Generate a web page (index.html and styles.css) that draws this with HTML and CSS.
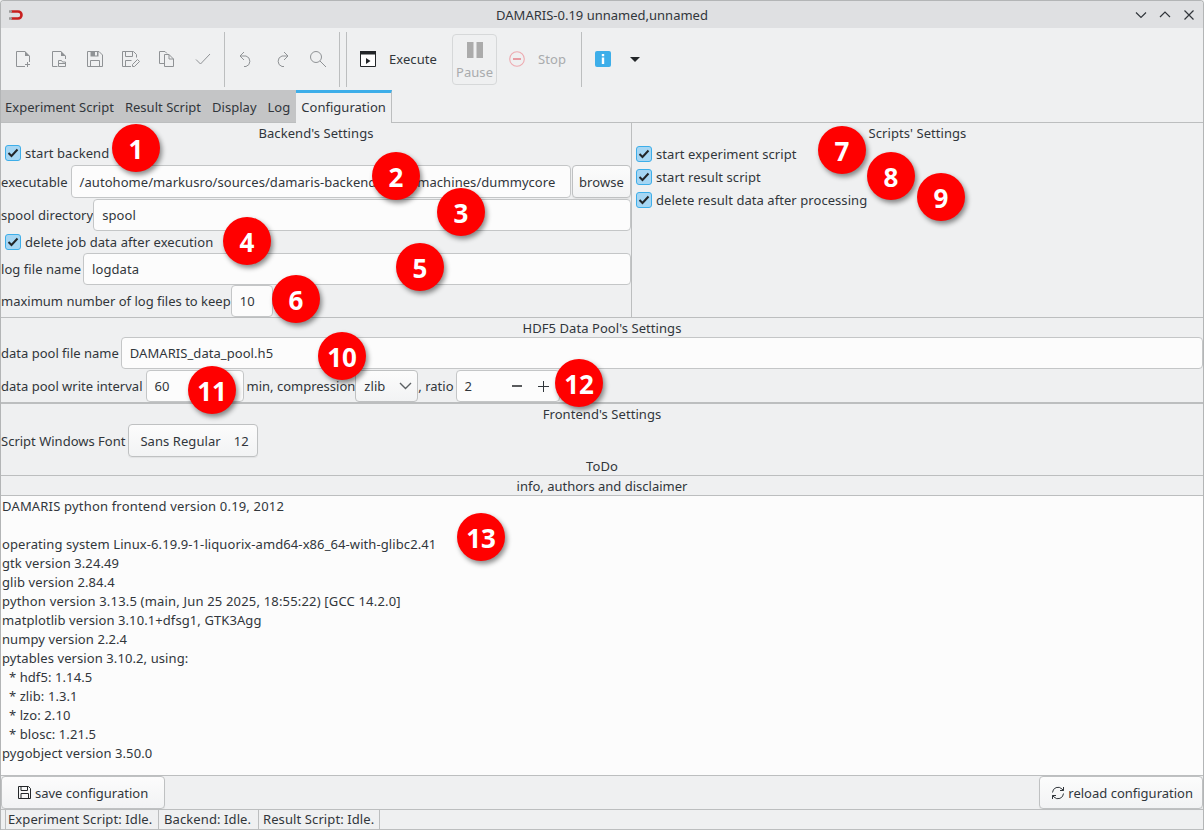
FILE: index.html
```html
<!DOCTYPE html>
<html lang="en">
<head>
    <meta charset="UTF-8">
    <title>DAMARIS-0.19 unnamed,unnamed</title>
    <link rel="stylesheet" href="styles.css">
</head>
<body>
<div class="window">
    <!-- title bar -->
    <div class="titlebar">
        <svg class="logo" width="16" height="12" viewBox="0 0 16 12"><path d="M3 2.500h7a3.500 3.500 0 0 1 0 7H3" fill="none" stroke="#c8201f" stroke-width="2.600"/><path d="M1 2.500h3M1 9.500h3" stroke="#9a9a9a" stroke-width="2.600"/></svg>
        <div class="title">DAMARIS-0.19 unnamed,unnamed</div>
        <div class="winbtns">
            <svg width="12" height="12" viewBox="0 0 12 12"><path d="M1 3.500l5 5 5-5" fill="none" stroke="#31363b" stroke-width="1.200"/></svg>
            <svg width="12" height="12" viewBox="0 0 12 12"><path d="M1 8l5-5 5 5" fill="none" stroke="#31363b" stroke-width="1.200"/></svg>
            <svg width="12" height="12" viewBox="0 0 12 12"><path d="M1.500 1.500l9 9M10.500 1.500l-9 9" fill="none" stroke="#31363b" stroke-width="1.200"/></svg>
        </div>
    </div>

    <!-- toolbar -->
    <div class="toolbar">
        <div class="tool"><svg class="ico" width="14" height="16" viewBox="0 0 14 16"><path d="M9 15.500H.500V.500h8.500M13.500 5v6"/><path class="solid" d="M9 0l5 5H9z"/><path d="M11.500 11v5M9 13.500h5"/></svg></div>
        <div class="tool"><svg class="ico" width="14" height="16" viewBox="0 0 14 16"><path d="M5.500 15.500H.500V.500h8.500M13.500 5v3"/><path class="solid" d="M9 0l5 5H9z"/><path d="M6.500 15.500v-6h3l1 1.500h3v4.500zM6.500 12.500h7"/></svg></div>
        <div class="tool"><svg class="ico" width="16" height="16" viewBox="0 0 16 16"><path d="M.500.500h11.500l3.500 3.500v11.500H.500zM3.500 15.500v-6h9v6"/><path class="solid" d="M3.500 0h8v5.500h-8z"/><path class="cut" d="M8 1h2v3.500H8z"/></svg></div>
        <div class="tool"><svg class="ico" width="18" height="16" viewBox="0 0 18 16"><path d="M9 15.500H.500V.500h11l3 3v3M3.500 15.500v-6h6M3.500.500v5h7v-5"/><path d="M10.500 15.500v-2l5-5 2 2-5 5z"/></svg></div>
        <div class="tool"><svg class="ico" width="16" height="16" viewBox="0 0 16 16"><path d="M5 12.500H.500V.500h5.500l2 2M5.500 15.500v-12H10l4.500 4.500v7.500zM10 3.500V8h4.500"/></svg></div>
        <div class="tool"><svg class="ico" width="16" height="12" viewBox="0 0 16 12"><path d="M1 6.500l4.500 4.500L15 1"/></svg></div>
        <div class="vsep sep-a"></div>
        <div class="tool"><svg class="ico" width="14" height="16" viewBox="0 0 14 16"><path d="M5 1L1 5l4 4M1 5h6a5.500 5.500 0 0 1 0 10.500H5"/></svg></div>
        <div class="tool"><svg class="ico" width="14" height="16" viewBox="0 0 14 16"><path d="M9 1l4 4-4 4M13 5H7a5.500 5.500 0 0 0 0 10.500h2"/></svg></div>
        <div class="tool"><svg class="ico" width="16" height="16" viewBox="0 0 16 16"><circle cx="6" cy="6" r="5.500"/><path d="M10 10l6 6"/></svg></div>
        <div class="vsep sep-b"></div>
        <div class="vsep sep-c"></div>
        <div class="tool-text run">
            <svg width="16" height="16" viewBox="0 0 16 16"><path d="M.500.500h15v15H.500z" fill="#fff" stroke="#232629"/><path d="M0 0h16v3.500H0z" fill="#232629"/><path d="M6 7l4.500 3L6 13z" fill="#232629"/></svg>
            <span>Execute</span>
        </div>
        <div class="pause">
            <svg width="16" height="16" viewBox="0 0 16 16"><path d="M0 0h6.500v16H0zM9.500 0H16v16H9.500z" fill="#ababab"/></svg>
            <span>Pause</span>
        </div>
        <div class="tool-text stop">
            <svg width="16" height="16" viewBox="0 0 16 16"><circle cx="8" cy="8" r="7.300" fill="none" stroke="#eeaab0" stroke-width="1.100"/><path d="M4 8h8" stroke="#e58088" stroke-width="1.400"/></svg>
            <span>Stop</span>
        </div>
        <div class="vsep sep-d"></div>
        <div class="tool"><svg width="16" height="16" viewBox="0 0 16 16"><rect width="16" height="16" rx="2" fill="#3daee9"/><path d="M6.800 3h2.400v2.200H6.800zM6.800 6.500h2.400V13H6.800z" fill="#fff"/></svg></div>
        <div class="caret"></div>
    </div>

    <!-- tabs -->
    <div class="tabs">
        <div class="tab">Experiment Script</div>
        <div class="tab">Result Script</div>
        <div class="tab">Display</div>
        <div class="tab">Log</div>
        <div class="tab active">Configuration</div>
    </div>

    <div class="content">
        <div class="settings-top">
            <div class="col-backend">
                <div class="heading">Backend's Settings</div>
                <div class="check-row start-backend"><span class="check"><svg width="12" height="10" viewBox="0 0 12 10"><path d="M1.500 5l3 3 6-6.500" fill="none" stroke="#232629" stroke-width="2"/></svg></span>start backend</div>
                <div class="row row-exec">
                    <label class="lbl">executable</label>
                    <div class="entry grow">/autohome/markusro/sources/damaris-backend/build/machines/dummycore</div>
                    <div class="btn browse">browse</div>
                </div>
                <div class="row row-spool">
                    <label class="lbl">spool directory</label>
                    <div class="entry grow">spool</div>
                </div>
                <div class="check-row delete-job"><span class="check"><svg width="12" height="10" viewBox="0 0 12 10"><path d="M1.500 5l3 3 6-6.500" fill="none" stroke="#232629" stroke-width="2"/></svg></span>delete job data after execution</div>
                <div class="row row-log">
                    <label class="lbl">log file name</label>
                    <div class="entry grow">logdata</div>
                </div>
                <div class="row row-keep">
                    <label class="lbl">maximum number of log files to keep</label>
                    <div class="entry keep">10</div>
                </div>
            </div>
            <div class="col-scripts">
                <div class="heading">Scripts' Settings</div>
                <div class="check-row"><span class="check"><svg width="12" height="10" viewBox="0 0 12 10"><path d="M1.500 5l3 3 6-6.500" fill="none" stroke="#232629" stroke-width="2"/></svg></span>start experiment script</div>
                <div class="check-row"><span class="check"><svg width="12" height="10" viewBox="0 0 12 10"><path d="M1.500 5l3 3 6-6.500" fill="none" stroke="#232629" stroke-width="2"/></svg></span>start result script</div>
                <div class="check-row"><span class="check"><svg width="12" height="10" viewBox="0 0 12 10"><path d="M1.500 5l3 3 6-6.500" fill="none" stroke="#232629" stroke-width="2"/></svg></span>delete result data after processing</div>
            </div>
        </div>

        <div class="section hdf">
            <div class="heading">HDF5 Data Pool's Settings</div>
            <div class="row row-pool">
                <label class="lbl">data pool file name</label>
                <div class="entry grow">DAMARIS_data_pool.h5</div>
            </div>
            <div class="row row-interval">
                <label class="lbl">data pool write interval</label>
                <div class="entry interval">60</div>
                <label class="lbl min">min, compression</label>
                <div class="combo">zlib<svg width="13" height="8" viewBox="0 0 13 8"><path d="M1 1l5.500 5.500L12 1" fill="none" stroke="#5c6164" stroke-width="1.400"/></svg></div>
                <label class="lbl ratio">, ratio</label>
                <div class="entry spin">
                    <span>2</span>
                    <svg class="minus" width="10" height="10" viewBox="0 0 10 10"><path d="M0 5h10" stroke="#232629" stroke-width="1.600"/></svg>
                    <svg class="plus" width="11" height="11" viewBox="0 0 11 11"><path d="M0 5.500h11M5.500 0v11" stroke="#31363b"/></svg>
                </div>
            </div>
        </div>

        <div class="section frontend">
            <div class="heading">Frontend's Settings</div>
            <div class="row row-font">
                <label class="lbl">Script Windows Font</label>
                <div class="btn font"><span>Sans Regular</span><span>12</span></div>
            </div>
            <div class="todo">ToDo</div>
        </div>

        <div class="info-head">info, authors and disclaimer</div>
        <pre class="info"><span class="wide">DAMARIS python frontend version 0.19, 2012</span>

operating system Linux-6.19.9-1-liquorix-amd64-x86_64-with-glibc2.41
gtk version 3.24.49
glib version 2.84.4
<span class="wide">python version 3.13.5 (main, Jun 25 2025, 18:55:22) [GCC 14.2.0]</span>
matplotlib version 3.10.1+dfsg1, GTK3Agg
numpy version 2.2.4
pytables version 3.10.2, using:
  * hdf5: 1.14.5
  * zlib: 1.3.1
  * lzo: 2.10
  * blosc: 1.21.5
pygobject version 3.50.0</pre>

        <div class="actions">
            <div class="btn action save">
                <svg width="13" height="13" viewBox="0 0 13 13"><path d="M.500.500h10l2 2v10H.500z M3 .500v4h6.500v-4M3 12.500V7.500h7.500v5" fill="none" stroke="#232629"/></svg>
                save configuration
            </div>
            <div class="btn action reload">
                <svg width="14" height="14" viewBox="0 0 14 14"><path d="M1.500 6.500A5.500 5.500 0 0 1 11 3l1.500 1.500M12.500 1v3.500H9M12.500 7.500A5.500 5.500 0 0 1 3 11L1.500 9.500M1.500 13V9.500H5" fill="none" stroke="#31363b"/></svg>
                reload configuration
            </div>
        </div>
    </div>

    <!-- status bar -->
    <div class="statusbar">
        <div class="cell cell-exp">Experiment Script: Idle.</div>
        <div class="cell cell-back">Backend: Idle.</div>
        <div class="cell cell-res">Result Script: Idle.</div>
    </div>

    <!-- numbered callouts laid over the screenshot -->
    <div class="badge b1">1</div>
    <div class="badge b2">2</div>
    <div class="badge b3">3</div>
    <div class="badge b4">4</div>
    <div class="badge b5">5</div>
    <div class="badge b6">6</div>
    <div class="badge b7">7</div>
    <div class="badge b8">8</div>
    <div class="badge b9">9</div>
    <div class="badge b10">10</div>
    <div class="badge b11">11</div>
    <div class="badge b12">12</div>
    <div class="badge b13">13</div>
</div>
</body>
</html>
```

FILE: styles.css
```css
* {
    box-sizing: border-box;
    margin: 0;
    padding: 0;
}

html, body {
    height: 100%;
    overflow: hidden;
}

body {
    font-family: "Noto Sans", sans-serif;
    font-size: 13px;
    letter-spacing: 0.06px;
    color: #31363b;
    background-color: #eff0f1;
}

.window {
    position: relative;
    height: 830px;
    display: flex;
    flex-direction: column;
    border: 1px solid #b3b5b6;
    border-bottom: 0;
    border-top-left-radius: 4px;
    border-top-right-radius: 4px;
    overflow: hidden;
}

.titlebar {
    height: 27px;
    flex: none;
    background-color: #dfe0e2;
    display: flex;
    align-items: center;
    position: relative;
    padding-left: 7px;
}

.title {
    position: absolute;
    left: 0;
    right: 0;
    text-align: center;
    letter-spacing: 0;
}

.winbtns {
    margin-left: auto;
    display: flex;
    gap: 12px;
    padding-right: 8px;
    position: relative;
}

.toolbar {
    height: 62px;
    flex: none;
    display: flex;
    align-items: center;
    padding-left: 4px;
}

.tool {
    width: 36px;
    display: flex;
    justify-content: center;
    flex: none;
}

.ico {
    fill: none;
    stroke: #8f9295;
}

.ico .solid {
    fill: #8f9295;
    stroke: none;
}

.ico .cut {
    fill: #eff0f1;
    stroke: none;
}

.vsep {
    width: 1px;
    height: 55px;
    flex: none;
    background-color: #bcbebf;
}

.sep-a {
    margin: 0 3px;
}

.sep-b {
    margin-left: 3px;
}

.sep-c {
    margin-left: 6px;
    margin-right: 13px;
}

.sep-d {
    margin-left: 4px;
    margin-right: 3px;
}

.tool-text {
    display: flex;
    align-items: center;
}

.run {
    width: 92px;
    gap: 13px;
}

.pause {
    width: 45px;
    height: 51px;
    flex: none;
    border: 1px solid #d6d8d9;
    border-radius: 4px;
    display: flex;
    flex-direction: column;
    align-items: center;
    padding-top: 7px;
    color: #a9abad;
    line-height: 18px;
    gap: 5px;
}

.stop {
    width: 80px;
    padding-left: 12px;
    gap: 13px;
    color: #a9abad;
}

.caret {
    width: 0;
    height: 0;
    margin-left: 9px;
    border-left: 5px solid transparent;
    border-right: 5px solid transparent;
    border-top: 5px solid #232629;
}

.tabs {
    height: 33px;
    flex: none;
    display: flex;
    align-items: stretch;
    border-bottom: 1px solid #bcbebf;
}

.tab {
    background-color: #c4c5c6;
    padding: 3px 5.500px 0;
    line-height: 28px;
    white-space: nowrap;
    letter-spacing: 0.02px;
}

.tab:first-child {
    padding-left: 4px;
}

.tab.active {
    background-color: #eff0f1;
    border-top: 3px solid #3daee9;
    border-right: 1px solid #bcbebf;
    padding: 0 5px 0 5.500px;
    margin-bottom: -1px;
    line-height: 28px;
}

.content {
    flex: 1;
    min-height: 0;
    display: flex;
    flex-direction: column;
}

.heading {
    text-align: center;
    height: 20px;
    line-height: 20px;
}

.settings-top {
    height: 195px;
    flex: none;
    display: flex;
    border-bottom: 1px solid #bcbebf;
}

.col-backend {
    width: 631px;
    flex: none;
    border-right: 1px solid #bcbebf;
}

.col-scripts {
    flex: 1;
}

.settings-top .heading {
    height: 19px;
    line-height: 21px;
}

.row {
    display: flex;
    align-items: center;
}

.lbl {
    white-space: nowrap;
    flex: none;
}

.entry {
    height: 33px;
    background-color: #fcfcfc;
    border: 1px solid #c4c6c7;
    border-radius: 4px;
    padding: 0 8px;
    display: flex;
    align-items: center;
    white-space: nowrap;
    overflow: hidden;
}

.grow {
    flex: 1;
    min-width: 0;
}

.btn {
    background: linear-gradient(#fcfcfc, #f2f3f4);
    border: 1px solid #bfc1c2;
    border-radius: 4px;
    box-shadow: 0 1px 1px rgba(0, 0, 0, 0.06);
    display: flex;
    align-items: center;
    white-space: nowrap;
}

.check-row {
    display: flex;
    align-items: center;
    height: 23px;
    padding-left: 4px;
    gap: 4px;
}

.check {
    width: 16px;
    height: 16px;
    flex: none;
    background-color: #a6d6f3;
    border: 1px solid #3daee9;
    border-radius: 3px;
    display: flex;
    align-items: center;
    justify-content: center;
}

.start-backend {
    height: 23px;
    padding-bottom: 1px;
}

.row-exec {
    height: 33px;
}

.row-exec .lbl {
    margin-right: 3px;
}

.browse {
    width: 59px;
    height: 33px;
    margin-left: 1px;
    flex: none;
    justify-content: center;
}

.row-spool {
    height: 33px;
}

.row-spool .entry {
    height: 32px;
}

.delete-job {
    height: 22px;
}

.row-log {
    height: 32px;
}

.row-log .lbl {
    margin-right: 2px;
}

.row-log .entry {
    height: 32px;
}

.row-keep {
    height: 32px;
}

.row-keep .lbl {
    letter-spacing: 0;
}

.row-keep .entry {
    height: 32px;
}

.keep {
    width: 42px;
}

.hdf {
    height: 86px;
    flex: none;
    border-bottom: 2px solid #bcbebf;
}

.row-pool {
    height: 32px;
    margin-top: -1px;
}

.row-pool .lbl {
    letter-spacing: 0;
    margin-right: 2px;
}

.row-pool .entry {
    height: 32px;
}

.row-interval {
    height: 32px;
    margin-top: 1px;
}

.row-interval .lbl {
    letter-spacing: 0;
}

.row-interval .entry {
    height: 32px;
}

.interval {
    width: 98px;
    margin-left: 3px;
}

.min {
    margin-left: 3px;
}

.combo {
    width: 63px;
    height: 32px;
    padding: 0 5px 0 8px;
    background: linear-gradient(#fcfcfc, #f2f3f4);
    border: 1px solid #bfc1c2;
    border-radius: 4px;
    display: flex;
    align-items: center;
    justify-content: space-between;
}

.spin {
    width: 104px;
    margin-left: 2px;
    position: relative;
}

.minus {
    position: absolute;
    left: 55px;
}

.plus {
    position: absolute;
    left: 81px;
}

.frontend {
    height: 72px;
    flex: none;
    border-bottom: 1px solid #bcbebf;
}

.row-font .lbl {
    letter-spacing: 0;
    margin-right: 3px;
}

.font {
    width: 130px;
    height: 33px;
    padding-left: 11px;
    gap: 13px;
}

.todo {
    text-align: center;
    height: 18px;
    line-height: 18px;
}

.info-head {
    height: 20px;
    flex: none;
    line-height: 20px;
    letter-spacing: 0;
    text-align: center;
    border-bottom: 1px solid #bcbebf;
}

.info {
    flex: 1;
    min-height: 0;
    background-color: #fcfcfc;
    font-family: inherit;
    letter-spacing: 0.09px;
    line-height: 19px;
    padding: 1px 0 0 1px;
    color: #31363b;
    overflow: hidden;
    border-bottom: 1px solid #bcbebf;
}

.wide {
    letter-spacing: 0.18px;
}

.actions {
    height: 33px;
    flex: none;
    display: flex;
    justify-content: space-between;
}

.action {
    height: 33px;
    padding: 0 16px;
    gap: 4px;
    letter-spacing: 0;
}

.reload {
    padding: 0 9px 0 11px;
    gap: 3px;
}

.statusbar {
    height: 21px;
    flex: none;
    display: flex;
    padding-left: 4px;
    border-top: 1px solid #bcbebf;
    border-bottom: 1px solid #bcbebf;
    letter-spacing: 0.1px;
}

.cell {
    border-left: 1px solid #bcbebf;
    line-height: 18px;
}

.cell-exp {
    width: 153px;
    padding-left: 2px;
}

.cell-back {
    width: 100px;
    padding-left: 5px;
}

.cell-res {
    width: 122px;
    padding-left: 4px;
    border-right: 1px solid #bcbebf;
}

.badge {
    position: absolute;
    width: 48px;
    height: 48px;
    border-radius: 50%;
    background-color: #f00;
    color: #fff;
    font-family: "Noto Sans", sans-serif;
    font-weight: 700;
    font-size: 26px;
    letter-spacing: 0;
    line-height: 50px;
    text-align: center;
    box-shadow: 2px 3px 5px rgba(0, 0, 0, 0.45);
}

/* callout positions inside the window border */
.b1 { left: 111px; top: 123px; }
.b2 { left: 371px; top: 151px; }
.b3 { left: 436px; top: 187px; }
.b4 { left: 222px; top: 216px; }
.b5 { left: 395px; top: 242px; }
.b6 { left: 271px; top: 274px; }
.b7 { left: 817px; top: 125px; }
.b8 { left: 866px; top: 151px; }
.b9 { left: 916px; top: 172px; }
.b10 { left: 317px; top: 331px; }
.b11 { left: 187px; top: 365px; }
.b12 { left: 554px; top: 358px; }
.b13 { left: 456px; top: 512px; }
```
